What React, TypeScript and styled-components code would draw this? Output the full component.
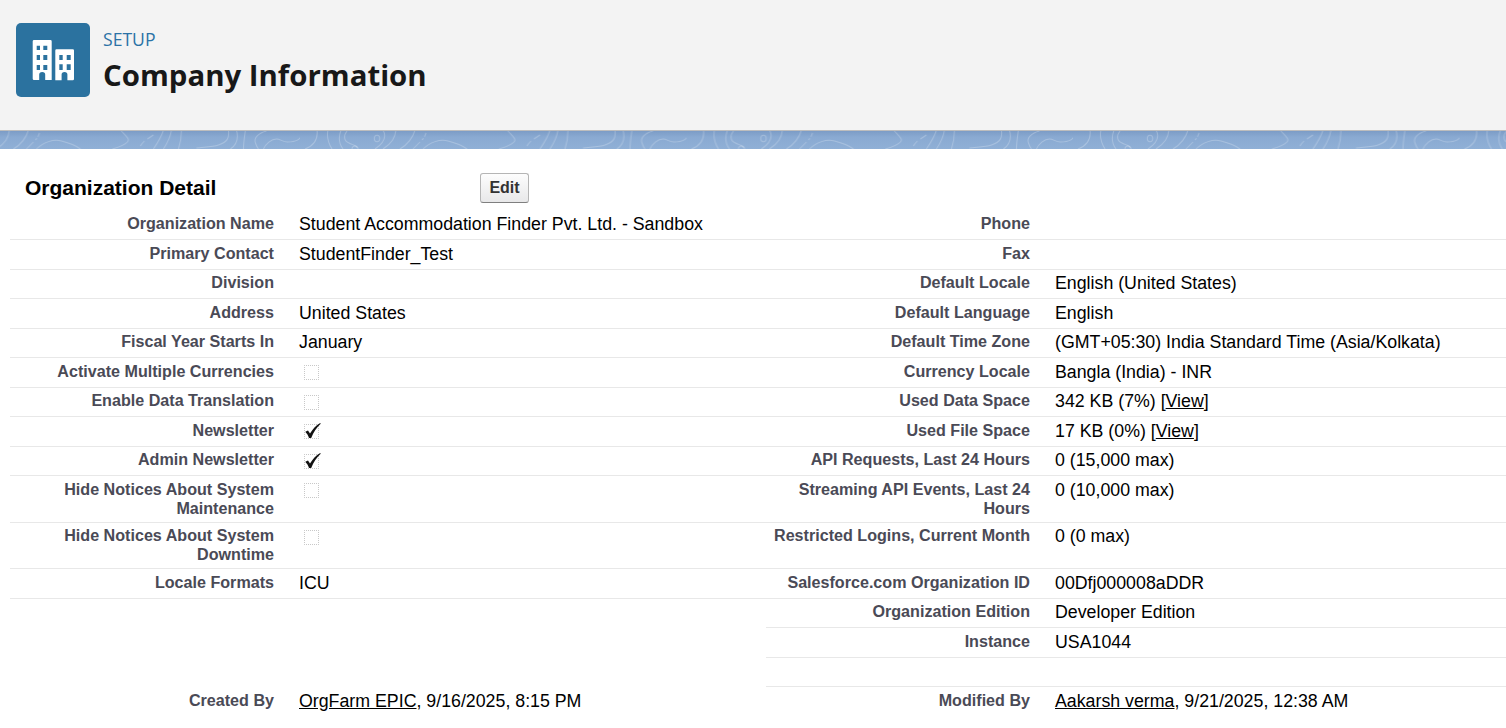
import { ReactNode } from "react";
import styled, { createGlobalStyle } from "styled-components";

type Field = {
  label?: ReactNode;
  value?: ReactNode;
};

type DetailRow = [Field, Field];

const View = () => <ValueLink href="#">View</ValueLink>;

const rows: DetailRow[] = [
  [
    { label: "Organization Name", value: "Student Accommodation Finder Pvt. Ltd. - Sandbox" },
    { label: "Phone", value: "" },
  ],
  [
    { label: "Primary Contact", value: "StudentFinder_Test" },
    { label: "Fax", value: "" },
  ],
  [
    { label: "Division", value: "" },
    { label: "Default Locale", value: "English (United States)" },
  ],
  [
    { label: "Address", value: "United States" },
    { label: "Default Language", value: "English" },
  ],
  [
    { label: "Fiscal Year Starts In", value: "January" },
    { label: "Default Time Zone", value: "(GMT+05:30) India Standard Time (Asia/Kolkata)" },
  ],
  [
    { label: "Activate Multiple Currencies", value: <CheckBox /> },
    { label: "Currency Locale", value: "Bangla (India) - INR" },
  ],
  [
    { label: "Enable Data Translation", value: <CheckBox /> },
    { label: "Used Data Space", value: <>342 KB (7%) [<View />]</> },
  ],
  [
    { label: "Newsletter", value: <CheckBox checked /> },
    { label: "Used File Space", value: <>17 KB (0%) [<View />]</> },
  ],
  [
    { label: "Admin Newsletter", value: <CheckBox checked /> },
    { label: "API Requests, Last 24 Hours", value: "0 (15,000 max)" },
  ],
  [
    { label: "Hide Notices About System Maintenance", value: <CheckBox /> },
    { label: "Streaming API Events, Last 24 Hours", value: "0 (10,000 max)" },
  ],
  [
    { label: "Hide Notices About System Downtime", value: <CheckBox /> },
    { label: "Restricted Logins, Current Month", value: "0 (0 max)" },
  ],
  [
    { label: "Locale Formats", value: "ICU" },
    { label: "Salesforce.com Organization ID", value: "00Dfj000008aDDR" },
  ],
  [{}, { label: "Organization Edition", value: "Developer Edition" }],
  [{}, { label: "Instance", value: "USA1044" }],
  [{}, { label: "", value: "" }],
];

function CheckBox({ checked = false }: { checked?: boolean }) {
  return (
    <Box>
      {checked ? (
        <svg width="19" height="18" viewBox="0 0 19 18">
          <path
            d="M2.3 9.8 L5 8.4 L7 11.6 C9.5 7.2 13 3.4 17.2 1 L17.7 1.7 C13.6 5.4 10.6 10 8.2 16 L6 16 C5.2 13.5 4 11.6 2.3 9.8 Z"
            fill="#111"
          />
        </svg>
      ) : null}
    </Box>
  );
}

function BuildingIcon() {
  return (
    <svg width="74" height="74" viewBox="0 0 74 74" fill="#fff">
      <path
        fillRule="evenodd"
        d="M16.7 18.2 Q16.7 17 18 17 H34.4 Q35.7 17 35.7 18.2 V57 H29.2 V51.5 Q29.2 49 26.2 49 Q23.2 49 23.2 51.5 V57 H18 Q16.7 57 16.7 55.8 Z
           M20.7 22.7 V27 H24 V22.7 Z M27.3 22.7 V27 H31.3 V22.7 Z
           M20.7 32 V37 H24 V32 Z M27.3 32 V37 H31.3 V32 Z
           M20.7 42 V47 H24 V42 Z M27.3 42 V47 H31.3 V42 Z"
      />
      <path
        fillRule="evenodd"
        d="M39.3 27.5 Q39.3 26.3 40.5 26.3 H56.8 Q58 26.3 58 27.5 V56 Q58 57.3 56.8 57.3 H51.4 V51.5 Q51.4 49 48.5 49 Q45.6 49 45.6 51.5 V57.3 H39.3 Z
           M43.3 32 V37 H46.7 V32 Z M50.7 32 V37 H54.7 V32 Z
           M43.3 41.3 V47 H46.7 V41.3 Z M50.7 41.3 V47 H54.7 V41.3 Z"
      />
    </svg>
  );
}

function BannerPattern() {
  return (
    <PatternSvg width="1506" height="18" viewBox="0 1 1506 18" fill="none">
      <defs>
        <pattern id="contours" x="300" y="0" width="386.5" height="20" patternUnits="userSpaceOnUse">
          <g stroke="#ffffff" strokeOpacity="0.24" strokeWidth="1">
            <path d="M17 0 C18 8 16 15 5 19" />
            <path d="M28 0 C26 8 29 14 32 19" />
            <path d="M41 0 C38 8 39 14 43 19" />
            <path d="M47 1 C43 6 44 11 49 13 C52 15 57 15 57 18" />
            <path d="M52 19 a3 3 0 0 1 6 0" />
            <ellipse cx="77" cy="8.5" rx="2.7" ry="3.3" />
            <path d="M83 0 C87 7 84 13 75 19" />
            <path d="M96 0 C95 8 92 13 83 19" />
            <path d="M115 0 C113 7 108 14 100 19" />
            <path d="M126 3 C125 6 124 8 122 10" strokeDasharray="4 2" />
            <path d="M120 12 L113 19" />
            <path d="M123 19 C130 12 140 9 148 11 C156 13 163 16 167 19" />
            <path d="M207 0 C212 6 217 9 214 12 C211 15 206 17 199 19" />
            <path d="M240 5 L234 9" />
            <path d="M231 11 C229 13 228 14 227 16" />
            <path d="M250 0 C248 7 244 13 240 19" />
            <path d="M258 0 C257 7 254 13 250 19" />
            <path d="M268 0 C268 7 267 13 265 19" />
            <path d="M315 0 C316 8 314 12 305 15 C299 17 291 17 283 18" />
            <path d="M323 0 C325 7 324 14 317 19" />
            <path d="M332 0 C331 7 330 13 330 19" />
            <path d="M353 1 C345 3 340 8 342 13 C343 16 344 18 345 19" />
            <path d="M350 19 C352 14 358 9 363 9 C367 9 369 12 374 12 C381 12 388 11 390 0" />
          </g>
        </pattern>
      </defs>
      <rect x="0" y="0" width="1506" height="20" fill="url(#contours)" />
    </PatternSvg>
  );
}

export default function App() {
  return (
    <>
      <GlobalStyle />
      <Header>
        <IconTile>
          <BuildingIcon />
        </IconTile>
        <TitleBlock>
          <Eyebrow>SETUP</Eyebrow>
          <PageTitle>Company Information</PageTitle>
        </TitleBlock>
      </Header>
      <Banner>
        <BannerPattern />
      </Banner>
      <Main>
        <DetailHeader>
          <DetailTitle>Organization Detail</DetailTitle>
          <EditButton>Edit</EditButton>
        </DetailHeader>
        <div>
          {rows.map((row, index) => (
            <Row key={index}>
              {row.map((field, side) => {
                const lined = field.label !== undefined;
                return (
                  <Pair key={side} lined={lined}>
                    <Label>{field.label}</Label>
                    <Value>{field.value}</Value>
                  </Pair>
                );
              })}
            </Row>
          ))}
          <Row>
            <Pair lined={false}>
              <Label>Created By</Label>
              <Value>
                <ValueLink href="#">OrgFarm EPIC</ValueLink>, 9/16/2025, 8:15 PM
              </Value>
            </Pair>
            <Pair lined={false}>
              <Label>Modified By</Label>
              <Value>
                <ValueLink href="#">Aakarsh verma</ValueLink>, 9/21/2025, 12:38 AM
              </Value>
            </Pair>
          </Row>
        </div>
      </Main>
    </>
  );
}

const GlobalStyle = createGlobalStyle`
  html, body {
    margin: 0;
    height: 100%;
    overflow: hidden;
    background: #fff;
    font-family: "Liberation Sans", Arial, sans-serif;
  }
`;

const Header = styled.header`
  height: 131px;
  box-sizing: border-box;
  padding: 23px 16px 0;
  display: flex;
  align-items: flex-start;
  gap: 13px;
  background: #f3f3f3;
  border-bottom: 1px solid #bdbdbd;
  position: relative;
`;

const IconTile = styled.div`
  width: 74px;
  height: 74px;
  border-radius: 5px;
  background: #2b729f;
  flex: none;

  svg {
    display: block;
  }
`;

const TitleBlock = styled.div`
  display: flex;
  flex-direction: column;
`;

const Eyebrow = styled.div`
  font-family: "Open Sans", sans-serif;
  font-size: 17.6px;
  line-height: 22px;
  margin-top: 5px;
  color: #2b72a6;
`;

const PageTitle = styled.h1`
  font-family: "Open Sans", sans-serif;
  font-size: 29.4px;
  line-height: 38px;
  font-weight: 700;
  margin: 6px 0 0;
  color: #181818;
`;

const Banner = styled.div`
  height: 18px;
  background: linear-gradient(#7c9cc6, #8aaad2 35%, #90b0d6);
  overflow: hidden;
`;

const PatternSvg = styled.svg`
  display: block;
`;

const Main = styled.main`
  padding: 24px 0 0 10px;
`;

const DetailHeader = styled.div`
  display: flex;
  align-items: flex-start;
  height: 37.5px;
  margin-top: -3px;
  padding-top: 3px;
`;

const DetailTitle = styled.h2`
  width: 470px;
  height: 30px;
  line-height: 30px;
  padding-left: 15px;
  box-sizing: border-box;
  margin: 0;
  font-size: 21px;
  font-weight: 700;
  color: #000;
`;

const EditButton = styled.button`
  width: 49px;
  height: 30px;
  padding: 0;
  font-family: inherit;
  font-size: 16px;
  font-weight: 700;
  color: #333;
  border: 1px solid #b5b5b5;
  border-bottom-color: #7f7f7f;
  border-radius: 3px;
  background: linear-gradient(#fdfdfd, #e8e8e9);
`;

const Row = styled.div`
  display: grid;
  grid-template-columns: 756px 1fr;
`;

const Pair = styled.div<{ lined: boolean }>`
  display: grid;
  grid-template-columns: 264px 1fr;
  border-bottom: 1px solid ${(props) => (props.lined ? "#e8e8e8" : "transparent")};
`;

const Label = styled.div`
  padding: 3.75px 0 4.25px;
  min-height: 18.75px;
  font-size: 16.13px;
  line-height: 18.75px;
  font-weight: 700;
  text-align: right;
  color: #4a4a56;
`;

const Value = styled.div`
  padding: 3.5px 0 4.5px 25px;
  min-height: 20.5px;
  font-size: 17.78px;
  line-height: 20.5px;
  color: #000;
`;

const ValueLink = styled.a`
  color: #000;
  text-decoration: underline;
`;

const Box = styled.span`
  display: block;
  position: relative;
  box-sizing: border-box;
  width: 15px;
  height: 15px;
  margin: 3.5px 0 0 5px;
  border: 1px dotted #c8c8c8;
  border-radius: 1px;

  svg {
    position: absolute;
    left: -2px;
    top: -3px;
  }
`;
